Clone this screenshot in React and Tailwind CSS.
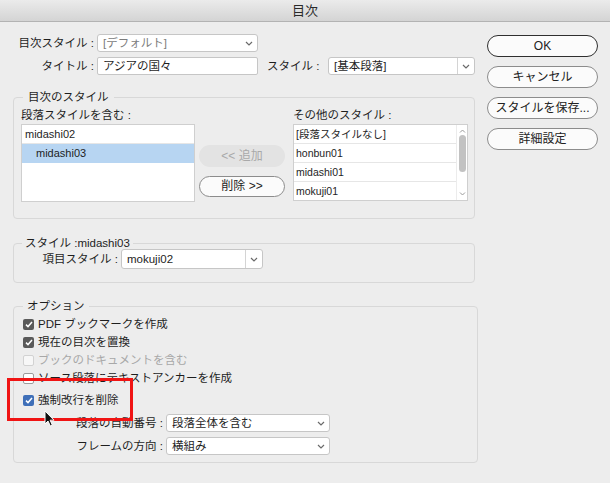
import React from "react";
import clsx from "clsx";

const Chevron = () => (
  <svg width="8" height="5" viewBox="0 0 8 5">
    <path d="M1 1l3 3 3-3" fill="none" stroke="#6a6a6a" strokeWidth="1.2" />
  </svg>
);

const Select = ({ w, children, sep, muted, h = "h-[18px]" }) => (
  <div className={clsx("flex items-center bg-white border border-[#c6c6c6] rounded-[3px]", w, h)}>
    <span className={clsx("flex-1 pl-[5px] truncate text-[11.5px] leading-[16px]", muted ? "text-[#7c7c7c]" : "text-[#1e1e1e]")}>
      {children}
    </span>
    <span className={clsx("flex items-center justify-center w-[17px] h-full", sep && "border-l border-[#d4d4d4]")}>
      <Chevron />
    </span>
  </div>
);

const Check = ({ state }) => {
  if (state === "off" || state === "disabled") {
    return (
      <span
        className={clsx(
          "w-[11px] h-[11px] rounded-[2px] border shrink-0",
          state === "off" ? "border-[#9c9c9c] bg-white" : "border-[#d2d2d2] bg-[#f7f7f7]"
        )}
      />
    );
  }
  return (
    <span
      className={clsx(
        "w-[11px] h-[11px] rounded-[2px] flex items-center justify-center shrink-0",
        state === "blue" ? "bg-[#3f6fb8]" : "bg-[#5a5a5a]"
      )}
    >
      <svg width="8" height="7" viewBox="0 0 8 7">
        <path d="M1 3.6l2 2 4-4.6" fill="none" stroke="#fff" strokeWidth="1.5" />
      </svg>
    </span>
  );
};

const CheckRow = ({ state, children, className }) => (
  <div className={clsx("flex items-center gap-[4px] h-[18px]", className)}>
    <Check state={state} />
    <span className={clsx("text-[11.5px] leading-[16px]", state === "disabled" ? "text-[#a8a8a8]" : "text-[#1e1e1e]")}>
      {children}
    </span>
  </div>
);

const PillButton = ({ children, primary }) => (
  <button
    className={clsx(
      "w-[111px] h-[22px] rounded-[11px] bg-[#fbfbfb] text-[12px] leading-[16px] text-[#222] flex items-center justify-center",
      primary ? "border-[1.5px] border-[#2f2f2f]" : "border border-[#8c8c8c]"
    )}
  >
    {children}
  </button>
);

const App = () => {
  const otherStyles = ["[段落スタイルなし]", "honbun01", "midashi01", "mokuji01"];

  return (
    <div className="relative w-[610px] h-[483px] overflow-hidden bg-[#ededed] text-[#1e1e1e] font-['Liberation_Sans','Noto_Sans_CJK_JP',sans-serif]">
      {/* title bar */}
      <div className="h-[22px] bg-gradient-to-b from-[#ebebeb] to-[#d4d4d4] border-b border-[#b3b3b3] flex items-center justify-center text-[13px] leading-[16px] text-[#2a2a2a]">
        目次
      </div>

      <div className="flex">
        {/* left column */}
        <div className="w-[465px] ml-[13px]">
          <div className="flex items-center mt-[12px] h-[18px]">
            <span className="w-[84px] text-right pr-[3px] text-[11.5px] leading-[16px]">目次スタイル :</span>
            <Select w="w-[161px]" muted>[デフォルト]</Select>
          </div>
          <div className="flex items-center mt-[5px] h-[18px]">
            <span className="w-[84px] text-right pr-[3px] text-[11.5px] leading-[16px]">タイトル :</span>
            <div className="w-[161px] h-[18px] bg-white border border-[#c6c6c6] rounded-[2px] pl-[5px] text-[11.5px] leading-[16px]">
              アジアの国々
            </div>
            <span className="ml-[9px] w-[61px] text-[11.5px] leading-[16px]">スタイル :</span>
            <Select w="w-[147px]" sep>[基本段落]</Select>
          </div>

          {/* 目次のスタイル */}
          <fieldset className="mt-[15px] w-[462px] border border-[#d8d8d8] rounded-[4px] pl-[7px] pb-[16px]">
            <legend className="ml-[2px] px-[5px] text-[11.5px] leading-[14px]">目次のスタイル</legend>
            <div className="flex">
              <div className="w-[174px]">
                <div className="mt-[4px] h-[14px] text-[11.5px] leading-[14px]">段落スタイルを含む :</div>
                <div className="mt-[2px] h-[78px] bg-white border border-[#cfcfcf]">
                  <div className="h-[19px] border-b border-[#e6e6e6] pl-[3px] text-[11px] leading-[18px]">midashi02</div>
                  <div className="h-[19px] bg-[#b7d5f2] pl-[14px] text-[11px] leading-[19px]">midashi03</div>
                </div>
              </div>
              <div className="ml-[4px] w-[86px] pt-[41px] flex flex-col">
                <div className="h-[22px] rounded-[11px] bg-[#e3e3e3] text-[#a9a9a9] text-[12px] leading-[22px] text-center">
                  &lt;&lt; 追加
                </div>
                <div className="mt-[9px] h-[21px] rounded-[11px] bg-[#fbfbfb] border border-[#8c8c8c] text-[12px] leading-[19px] text-center">
                  削除 &gt;&gt;
                </div>
              </div>
              <div className="ml-[8px] w-[175px]">
                <div className="mt-[4px] h-[14px] text-[11.5px] leading-[14px]">その他のスタイル :</div>
                <div className="mt-[2px] h-[77px] bg-white border border-[#cfcfcf] flex">
                  <div className="flex-1">
                    {otherStyles.map((s, i) => (
                      <div
                        key={s}
                        className={clsx("h-[19px] pl-[2px] text-[10.5px] leading-[18px]", i < 3 && "border-b border-[#e6e6e6]")}
                      >
                        {s}
                      </div>
                    ))}
                  </div>
                  <div className="w-[11px] flex flex-col items-center border-l border-[#ececec]">
                    <svg width="7" height="4" viewBox="0 0 7 4" className="mt-[4px]">
                      <path d="M1 3.5l2.5-2.5 2.5 2.5" fill="none" stroke="#9a9a9a" strokeWidth="1" />
                    </svg>
                    <div className="mt-[2px] w-[7px] h-[37px] rounded-[4px] bg-[#c2c2c2]" />
                    <div className="flex-1" />
                    <svg width="7" height="4" viewBox="0 0 7 4" className="mb-[4px]">
                      <path d="M1 0.5l2.5 2.5 2.5-2.5" fill="none" stroke="#9a9a9a" strokeWidth="1" />
                    </svg>
                  </div>
                </div>
              </div>
            </div>
          </fieldset>

          {/* スタイル :midashi03 */}
          <fieldset className="mt-[18px] w-[462px] border border-[#d8d8d8] rounded-[4px] pb-[13px]">
            <legend className="ml-[8px] px-[3px] text-[11.5px] leading-[12px]">スタイル :midashi03</legend>
            <div className="flex items-center">
              <span className="w-[107px] text-right pr-[3px] text-[11.5px] leading-[16px]">項目スタイル :</span>
              <Select w="w-[142px]" h="h-[20px]" sep>mokuji02</Select>
            </div>
          </fieldset>

          {/* オプション */}
          <fieldset className="mt-[17px] w-[465px] border border-[#d8d8d8] rounded-[4px] pl-[9px] pb-[7px]">
            <legend className="ml-[0px] px-[4px] text-[11.5px] leading-[12px]">オプション</legend>
            <CheckRow state="on" className="mt-[3px]">PDF ブックマークを作成</CheckRow>
            <CheckRow state="on">現在の目次を置換</CheckRow>
            <CheckRow state="disabled">ブックのドキュメントを含む</CheckRow>
            <CheckRow state="off">ソース段落にテキストアンカーを作成</CheckRow>
            <CheckRow state="blue" className="mt-[4px]">強制改行を削除</CheckRow>
            <div className="flex items-center mt-[5px] -ml-[9px]">
              <span className="w-[152px] text-right pr-[3px] text-[11.5px] leading-[16px]">段落の自動番号 :</span>
              <Select w="w-[164px]">段落全体を含む</Select>
            </div>
            <div className="flex items-center mt-[5px] -ml-[9px]">
              <span className="w-[152px] text-right pr-[3px] text-[11.5px] leading-[16px]">フレームの方向 :</span>
              <Select w="w-[164px]">横組み</Select>
            </div>
          </fieldset>
        </div>

        {/* right buttons */}
        <div className="ml-[9px] pt-[13px] flex flex-col gap-[9px]">
          <PillButton primary>OK</PillButton>
          <PillButton>キャンセル</PillButton>
          <PillButton>スタイルを保存...</PillButton>
          <PillButton>詳細設定</PillButton>
        </div>
      </div>

      {/* red highlight box */}
      <div className="absolute left-[7px] top-[378px] w-[126px] h-[43px] border-[3px] border-[#f01414]" />

      {/* mouse cursor */}
      <svg className="absolute left-[44px] top-[410px]" width="11" height="17" viewBox="0 0 11 17">
        <path d="M1 1v13l3-3 2.3 5 2-1-2.2-4.8H10z" fill="#111" stroke="#fff" strokeWidth="1" />
      </svg>
    </div>
  );
};

export default App;
